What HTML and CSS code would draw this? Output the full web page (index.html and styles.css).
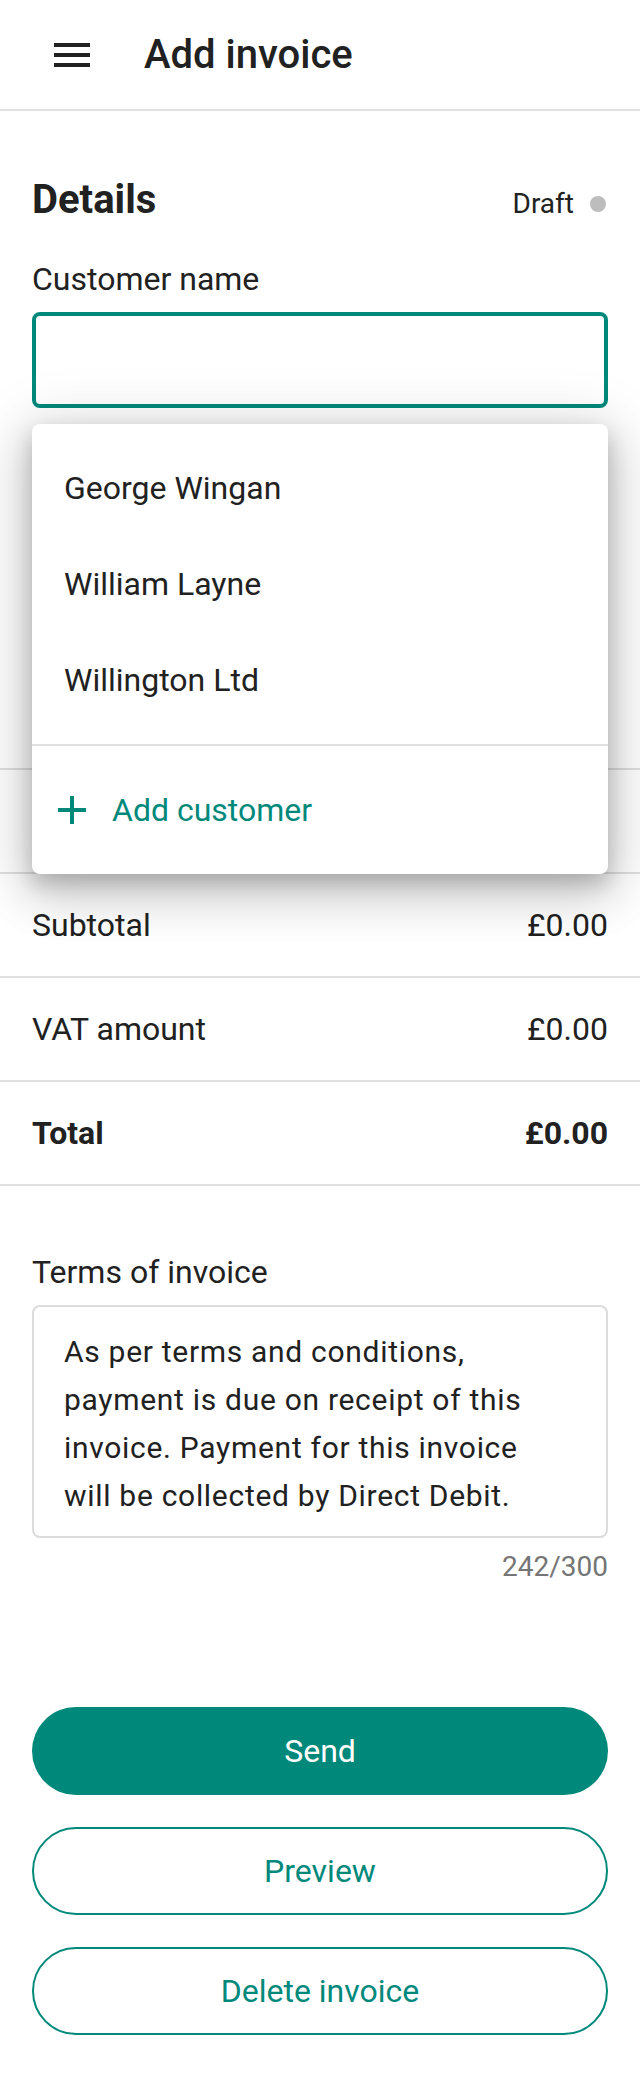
FILE: index.html
```html
<!DOCTYPE html>
<html lang="en">
<head>
    <meta charset="UTF-8">
    <meta name="viewport" content="width=device-width, initial-scale=1.0">
    <title>Add invoice</title>
    <link rel="stylesheet" href="styles.css">
</head>
<body>
    <header class="topbar">
        <button class="icon-btn" aria-label="Open menu">
            <svg viewBox="0 0 24 24" width="48" height="48"><path d="M3 18h18v-2H3v2zm0-5h18v-2H3v2zm0-7v2h18V6H3z"/></svg>
        </button>
        <h1 class="topbar-title">Add invoice</h1>
    </header>

    <main>
        <section class="details">
            <div class="details-head">
                <h2 class="section-title">Details</h2>
                <span class="status">Draft<span class="status-dot"></span></span>
            </div>

            <div class="field field-first">
                <label class="field-label" for="customer">Customer name</label>
                <div class="combo">
                    <input class="input input-focused" id="customer" type="text">
                    <div class="menu">
                        <ul class="menu-list">
                            <li class="menu-item">George Wingan</li>
                            <li class="menu-item">William Layne</li>
                            <li class="menu-item">Willington Ltd</li>
                        </ul>
                        <div class="menu-action">
                            <svg viewBox="0 0 24 24" width="48" height="48"><path d="M19 13h-6v6h-2v-6H5v-2h6V5h2v6h6v2z"/></svg>
                            <span>Add customer</span>
                        </div>
                    </div>
                </div>
            </div>

            <div class="field">
                <label class="field-label" for="invoice-date">Invoice date</label>
                <input class="input" id="invoice-date" type="text">
            </div>

            <div class="field">
                <label class="field-label" for="due-date">Due date</label>
                <input class="input" id="due-date" type="text">
            </div>
        </section>

        <section class="summary">
            <div class="row"><span>Items</span><span>0</span></div>
            <div class="row"><span>Subtotal</span><span>£0.00</span></div>
            <div class="row"><span>VAT amount</span><span>£0.00</span></div>
            <div class="row row-total"><span>Total</span><span>£0.00</span></div>
        </section>

        <section class="terms">
            <label class="field-label" for="terms">Terms of invoice</label>
            <textarea class="textarea" id="terms" rows="4">As per terms and conditions, payment is due on receipt of this invoice. Payment for this invoice will be collected by Direct Debit.</textarea>
            <div class="counter">242/300</div>
        </section>

        <section class="actions">
            <button class="btn btn-primary">Send</button>
            <button class="btn btn-outline">Preview</button>
            <button class="btn btn-outline">Delete invoice</button>
        </section>
    </main>
</body>
</html>
```

FILE: styles.css
```css
body {
    margin: 0;
    background-color: #fff;
    color: #212121;
    font-family: Roboto, "Noto Sans", Arial, sans-serif;
}
.topbar {
    display: flex;
    align-items: center;
    height: 109px;
    padding-left: 48px;
    border-bottom: 2px solid #e0e0e0;
}
.icon-btn {
    display: flex;
    padding: 0;
    border: 0;
    background: none;
    fill: #212121;
}
.topbar-title {
    margin: 0 0 0 48px;
    font-size: 40px;
    font-weight: 500;
}
.details {
    padding: 65px 32px 14px;
}
.details-head {
    display: flex;
    align-items: baseline;
    justify-content: space-between;
    height: 48px;
    line-height: 48px;
}
.section-title {
    margin: 0;
    font-size: 40px;
    font-weight: 700;
}
.status {
    display: flex;
    align-items: center;
    gap: 16px;
    margin-right: 2px;
    font-size: 28px;
    line-height: 40px;
}
.status-dot {
    width: 16px;
    height: 16px;
    border-radius: 50%;
    background-color: #bdbdbd;
}
.field {
    margin-top: 24px;
}
.field-first {
    margin-top: 35px;
}
.field-label {
    display: block;
    font-size: 32px;
    line-height: 40px;
    margin-bottom: 13px;
}
.combo {
    position: relative;
}
.input {
    display: block;
    box-sizing: border-box;
    width: 100%;
    height: 96px;
    margin: 0;
    border: 2px solid #dcdcdc;
    border-radius: 8px;
    font: inherit;
    font-size: 32px;
}
.input-focused {
    border: 4px solid #00897b;
    outline: none;
}
.menu {
    position: absolute;
    top: calc(100% + 16px);
    left: 0;
    right: 0;
    z-index: 10;
    background-color: #fff;
    border-radius: 8px;
    box-shadow: 0 10px 20px rgba(0, 0, 0, 0.18), 0 18px 48px 6px rgba(0, 0, 0, 0.14), 0 6px 60px 10px rgba(0, 0, 0, 0.1);
}
.menu-list {
    list-style: none;
    margin: 0;
    padding: 16px 0;
    border-bottom: 2px solid #e0e0e0;
}
.menu-item {
    display: flex;
    align-items: center;
    height: 96px;
    padding: 0 32px;
    font-size: 32px;
}
.menu-action {
    display: flex;
    align-items: center;
    gap: 16px;
    height: 128px;
    padding: 0 16px;
    color: #00897b;
    fill: #00897b;
    font-size: 32px;
}
.summary {
    border-top: 2px solid #e0e0e0;
}
.row {
    display: flex;
    align-items: center;
    justify-content: space-between;
    height: 102px;
    padding: 0 32px;
    border-bottom: 2px solid #e0e0e0;
    font-size: 32px;
}
.row-total {
    font-weight: 700;
}
.terms {
    padding: 66px 32px 0;
}
.field-label + .textarea {
    margin-top: 1px;
}
.textarea {
    display: block;
    box-sizing: border-box;
    width: 100%;
    height: 233px;
    margin: 0;
    padding: 21px 48px 16px 30px;
    border: 2px solid #dcdcdc;
    border-radius: 8px;
    resize: none;
    overflow: hidden;
    color: #212121;
    font-family: inherit;
    font-size: 30px;
    letter-spacing: 0.7px;
    line-height: 48px;
}
.counter {
    margin-top: 11px;
    text-align: right;
    color: #757575;
    font-size: 28px;
    line-height: 36px;
}
.actions {
    display: flex;
    flex-direction: column;
    gap: 32px;
    padding: 122px 32px 48px;
}
.btn {
    height: 88px;
    border-radius: 44px;
    font-family: inherit;
    font-size: 32px;
    cursor: pointer;
}
.btn-primary {
    border: 0;
    background-color: #00897b;
    color: #fff;
}
.btn-outline {
    border: 2px solid #00897b;
    background-color: #fff;
    color: #00897b;
}
```
